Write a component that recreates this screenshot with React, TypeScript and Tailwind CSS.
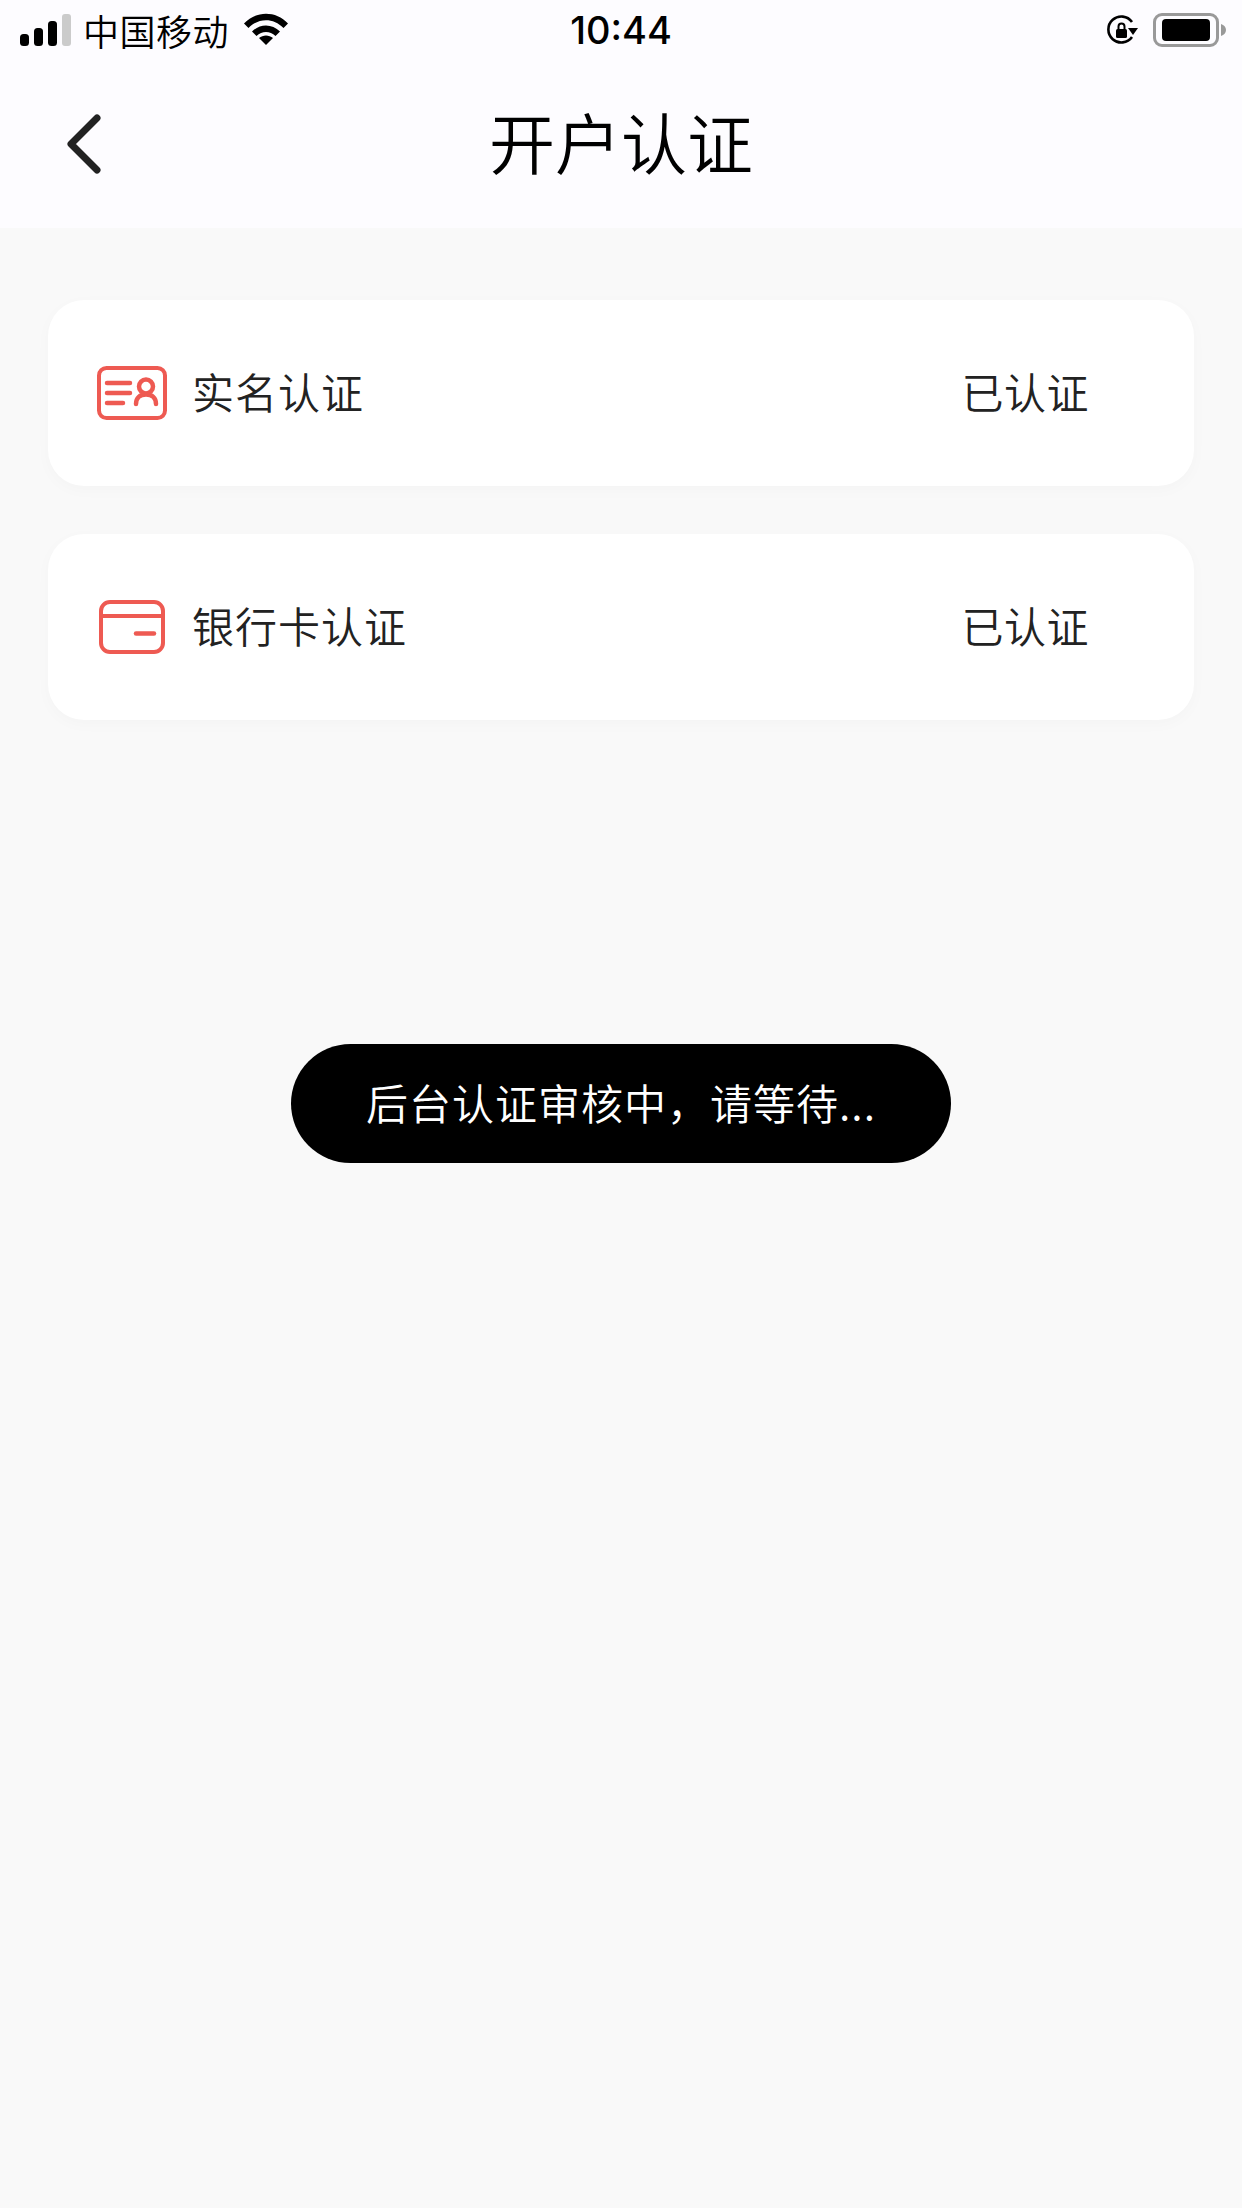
import React from 'react';

const FONT = "font-['Noto_Sans_CJK_SC','Liberation_Sans',sans-serif]";

const StatusBar: React.FC = () => (
  <div className="flex h-[60px] items-center justify-between text-black">
    <div className="flex w-[400px] items-center pl-[20px]">
      <svg width="52" height="34" viewBox="0 0 52 34" className="mt-[1px]">
        <rect x="0" y="20" width="9" height="12" rx="3.5" fill="#000" />
        <rect x="14" y="14" width="9" height="18" rx="3.5" fill="#000" />
        <rect x="28" y="7" width="9" height="25" rx="3.5" fill="#000" />
        <rect x="42" y="0" width="9" height="32" rx="3" fill="#cbcbcb" />
      </svg>
      <span className="ml-[11px] text-[36px] font-[350] leading-none tracking-[0.5px]">中国移动</span>
      <svg width="46" height="34" viewBox="0 0 46 34" className="ml-[14px] mb-[3px]">
        <path d="M1 11.5C13 -1.5 33 -1.5 45 11.5L40.5 16C30.5 5.5 15.5 5.5 5.5 16Z" fill="#000" />
        <path d="M9 19.5C17 11.5 29 11.5 37 19.5L32.5 24C27 18.5 19 18.5 13.5 24Z" fill="#000" />
        <path d="M23 33L16 26C20 22.5 26 22.5 30 26Z" fill="#000" />
      </svg>
    </div>
    <span className="font-['Inter',sans-serif] text-[38px] font-medium leading-none">10:44</span>
    <div className="flex w-[400px] items-center justify-end pr-[16px]">
      <svg width="32" height="32" viewBox="0 0 32 32">
        <path d="M26 23A13 13 0 1 1 26 8" fill="none" stroke="#000" strokeWidth="2.6" />
        <path d="M22 14H32L27 21Z" fill="#000" />
        <rect x="10" y="15" width="11" height="9" rx="1.5" fill="#000" />
        <path d="M12.5 15V12.5A3 3 0 0 1 18.5 12.5V15" fill="none" stroke="#000" strokeWidth="2" />
      </svg>
      <div className="ml-[15px] flex h-[34px] w-[66px] items-center justify-center rounded-[9px] border-[3px] border-[#999999]">
        <div className="h-[22px] w-[48px] rounded-[4px] bg-black" />
      </div>
      <svg width="5" height="12" viewBox="0 0 5 12" className="ml-[2px]">
        <path d="M0 0C3 1 5 3 5 6C5 9 3 11 0 12Z" fill="#999999" />
      </svg>
    </div>
  </div>
);

const IdIcon: React.FC = () => (
  <svg width="70" height="54" viewBox="0 0 70 54" fill="none" stroke="#ee5a52" strokeLinecap="round">
    <rect x="2" y="2" width="66" height="50" rx="7.5" strokeWidth="4" />
    <path d="M10 17H33M10 27H33M10 37H26" strokeWidth="4.5" />
    <circle cx="49" cy="20.5" r="7" strokeWidth="4.5" />
    <path d="M39 38C39 31.5 43 28.5 49 28.5C55 28.5 59 31.5 59 38" strokeWidth="4.5" />
  </svg>
);

const CardIcon: React.FC = () => (
  <svg width="66" height="54" viewBox="0 0 66 54" fill="none" stroke="#ee5a52" strokeLinecap="round">
    <rect x="2" y="2" width="62" height="50" rx="9" strokeWidth="4" />
    <path d="M2 16H64" strokeWidth="4" />
    <path d="M37 33.5H55" strokeWidth="4.5" />
  </svg>
);

const AuthRow: React.FC<{ icon: React.ReactNode; label: string }> = ({ icon, label }) => (
  <div className="flex h-[186px] items-center rounded-[36px] bg-white pl-[49px] pr-[105px] shadow-[0_4px_16px_rgba(0,0,0,0.025)]">
    <div className="flex w-[70px] justify-center">{icon}</div>
    <span className="mb-[5px] ml-[25px] text-[42px] font-[350] leading-none tracking-[1px] text-[#222222]">{label}</span>
    <span className="mb-[5px] ml-auto text-[42px] font-[350] leading-none tracking-[0.5px] text-[#222222]">已认证</span>
  </div>
);

export default function App() {
  return (
    <div className={`relative flex min-h-[2208px] w-[1242px] flex-col bg-[#f9f9f9] ${FONT}`}>
      <header className="h-[228px] bg-[#fdfcff]">
        <StatusBar />
        <div className="relative flex h-[168px] items-start justify-center">
          <svg width="36" height="60" viewBox="0 0 36 60" className="absolute left-[66px] top-[54px]">
            <path d="M31 4L5 30L31 56" fill="none" stroke="#222222" strokeWidth="7" strokeLinecap="round" strokeLinejoin="round" />
          </svg>
          <h1 className="mt-[47px] text-[66px] font-[350] leading-none text-black">开户认证</h1>
        </div>
      </header>

      <main className="flex flex-col gap-[48px] px-[48px] pt-[72px]">
        <AuthRow icon={<IdIcon />} label="实名认证" />
        <AuthRow icon={<CardIcon />} label="银行卡认证" />
      </main>

      <div className="absolute left-[291px] top-[1044px] flex h-[119px] w-[660px] items-center justify-center rounded-full bg-black pb-[3px] text-[42px] font-[350] leading-none tracking-[1px] text-white">
        后台认证审核中，请等待...
      </div>
    </div>
  );
}
